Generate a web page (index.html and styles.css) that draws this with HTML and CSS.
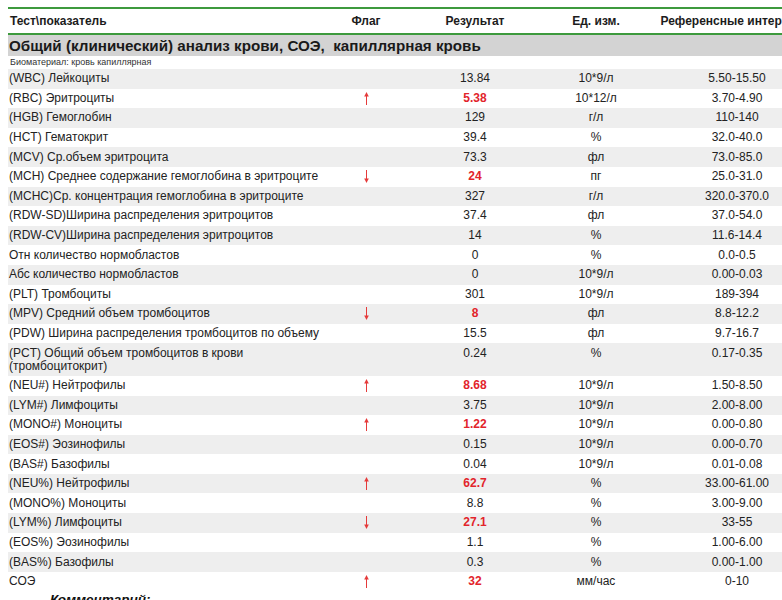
FILE: index.html
```html
<!DOCTYPE html>
<html lang="ru">
<head>
<meta charset="utf-8">
<title>Результаты анализов</title>
<link rel="stylesheet" href="styles.css">
</head>
<body>
<div class="sheet">
<table class="results">
<colgroup>
<col class="w-name"><col class="w-flag"><col class="w-res"><col class="w-unit"><col class="w-ref">
</colgroup>
<thead>
<tr><th class="c-name">Тест\показатель</th><th>Флаг</th><th>Результат</th><th>Ед. изм.</th><th>Референсные интервалы</th></tr>
</thead>
<tbody class="head">
<tr class="section"><td colspan="5">Общий (клинический) анализ крови, СОЭ,&nbsp; капиллярная кровь</td></tr>
<tr class="bio"><td colspan="5">Биоматериал: кровь капиллярная</td></tr>
</tbody>
<tbody class="data">
<tr><td class="c-name">(WBC) Лейкоциты</td><td></td><td>13.84</td><td>10*9/л</td><td>5.50-15.50</td></tr>
<tr><td class="c-name">(RBC) Эритроциты</td><td class="flag"><svg class="arrow" viewBox="0 0 7 13" width="7" height="13"><path d="M3.5 13V3" stroke="currentColor" stroke-width="1"/><path d="M3.5 0L1.2 4.5H5.8Z" fill="currentColor"/></svg></td><td class="bad">5.38</td><td>10*12/л</td><td>3.70-4.90</td></tr>
<tr><td class="c-name">(HGB) Гемоглобин</td><td></td><td>129</td><td>г/л</td><td>110-140</td></tr>
<tr><td class="c-name">(HCT) Гематокрит</td><td></td><td>39.4</td><td>%</td><td>32.0-40.0</td></tr>
<tr><td class="c-name">(MCV) Ср.объем эритроцита</td><td></td><td>73.3</td><td>фл</td><td>73.0-85.0</td></tr>
<tr><td class="c-name">(MCH) Среднее содержание гемоглобина в эритроците</td><td class="flag"><svg class="arrow" viewBox="0 0 7 13" width="7" height="13"><path d="M3.5 0V10" stroke="currentColor" stroke-width="1"/><path d="M3.5 13L1.2 8.5H5.8Z" fill="currentColor"/></svg></td><td class="bad">24</td><td>пг</td><td>25.0-31.0</td></tr>
<tr><td class="c-name">(MCHC)Ср. концентрация гемоглобина в эритроците</td><td></td><td>327</td><td>г/л</td><td>320.0-370.0</td></tr>
<tr><td class="c-name">(RDW-SD)Ширина распределения эритроцитов</td><td></td><td>37.4</td><td>фл</td><td>37.0-54.0</td></tr>
<tr><td class="c-name">(RDW-CV)Ширина распределения эритроцитов</td><td></td><td>14</td><td>%</td><td>11.6-14.4</td></tr>
<tr><td class="c-name">Отн количество нормобластов</td><td></td><td>0</td><td>%</td><td>0.0-0.5</td></tr>
<tr><td class="c-name">Абс количество нормобластов</td><td></td><td>0</td><td>10*9/л</td><td>0.00-0.03</td></tr>
<tr><td class="c-name">(PLT) Тромбоциты</td><td></td><td>301</td><td>10*9/л</td><td>189-394</td></tr>
<tr><td class="c-name">(MPV) Средний объем тромбоцитов</td><td class="flag"><svg class="arrow" viewBox="0 0 7 13" width="7" height="13"><path d="M3.5 0V10" stroke="currentColor" stroke-width="1"/><path d="M3.5 13L1.2 8.5H5.8Z" fill="currentColor"/></svg></td><td class="bad">8</td><td>фл</td><td>8.8-12.2</td></tr>
<tr><td class="c-name">(PDW) Ширина распределения тромбоцитов по объему</td><td></td><td>15.5</td><td>фл</td><td>9.7-16.7</td></tr>
<tr><td class="c-name">(PCT) Общий объем тромбоцитов в крови<br>(тромбоцитокрит)</td><td></td><td>0.24</td><td>%</td><td>0.17-0.35</td></tr>
<tr><td class="c-name">(NEU#) Нейтрофилы</td><td class="flag"><svg class="arrow" viewBox="0 0 7 13" width="7" height="13"><path d="M3.5 13V3" stroke="currentColor" stroke-width="1"/><path d="M3.5 0L1.2 4.5H5.8Z" fill="currentColor"/></svg></td><td class="bad">8.68</td><td>10*9/л</td><td>1.50-8.50</td></tr>
<tr><td class="c-name">(LYM#) Лимфоциты</td><td></td><td>3.75</td><td>10*9/л</td><td>2.00-8.00</td></tr>
<tr><td class="c-name">(MONO#) Моноциты</td><td class="flag"><svg class="arrow" viewBox="0 0 7 13" width="7" height="13"><path d="M3.5 13V3" stroke="currentColor" stroke-width="1"/><path d="M3.5 0L1.2 4.5H5.8Z" fill="currentColor"/></svg></td><td class="bad">1.22</td><td>10*9/л</td><td>0.00-0.80</td></tr>
<tr><td class="c-name">(EOS#) Эозинофилы</td><td></td><td>0.15</td><td>10*9/л</td><td>0.00-0.70</td></tr>
<tr><td class="c-name">(BAS#) Базофилы</td><td></td><td>0.04</td><td>10*9/л</td><td>0.01-0.08</td></tr>
<tr><td class="c-name">(NEU%) Нейтрофилы</td><td class="flag"><svg class="arrow" viewBox="0 0 7 13" width="7" height="13"><path d="M3.5 13V3" stroke="currentColor" stroke-width="1"/><path d="M3.5 0L1.2 4.5H5.8Z" fill="currentColor"/></svg></td><td class="bad">62.7</td><td>%</td><td>33.00-61.00</td></tr>
<tr><td class="c-name">(MONO%) Моноциты</td><td></td><td>8.8</td><td>%</td><td>3.00-9.00</td></tr>
<tr><td class="c-name">(LYM%) Лимфоциты</td><td class="flag"><svg class="arrow" viewBox="0 0 7 13" width="7" height="13"><path d="M3.5 0V10" stroke="currentColor" stroke-width="1"/><path d="M3.5 13L1.2 8.5H5.8Z" fill="currentColor"/></svg></td><td class="bad">27.1</td><td>%</td><td>33-55</td></tr>
<tr><td class="c-name">(EOS%) Эозинофилы</td><td></td><td>1.1</td><td>%</td><td>1.00-6.00</td></tr>
<tr><td class="c-name">(BAS%) Базофилы</td><td></td><td>0.3</td><td>%</td><td>0.00-1.00</td></tr>
<tr><td class="c-name">СОЭ</td><td class="flag"><svg class="arrow" viewBox="0 0 7 13" width="7" height="13"><path d="M3.5 13V3" stroke="currentColor" stroke-width="1"/><path d="M3.5 0L1.2 4.5H5.8Z" fill="currentColor"/></svg></td><td class="bad">32</td><td>мм/час</td><td>0-10</td></tr>
</tbody>
</table>
<p class="comment">Комментарий:</p>
</div>
</body>
</html>
```
FILE: styles.css
```css
html, body {
  margin: 0;
  padding: 0;
  overflow: hidden;
  background: #fff;
}
body {
  font-family: "Liberation Sans", Arial, sans-serif;
  color: #222;
}
.sheet {
  padding: 7px 0 0 8px;
}
.results {
  border-collapse: separate;
  border-spacing: 0;
  table-layout: fixed;
  width: 832px;
  font-size: 12px;
  line-height: 13px;
}
.w-name { width: 332px; }
.w-flag { width: 52px; }
.w-res { width: 166px; }
.w-unit { width: 76px; }
.w-ref { width: 206px; }

.results th {
  font-weight: bold;
  text-align: center;
  color: #1c1c1c;
  padding: 6px 0 5px;
  border-top: 2px solid #3d9a3d;
  border-bottom: 2px solid #3d9a3d;
  white-space: nowrap;
}
.results th.c-name {
  text-align: left;
  padding-left: 2px;
}
.section td {
  background: #d3d3d3;
  font-size: 15.2px;
  font-weight: bold;
  line-height: 21px;
  padding: 0 0 0 1px;
  color: #1a1a1a;
  white-space: nowrap;
}
.bio td {
  font-size: 9px;
  line-height: 13px;
  padding: 0 0 0 2px;
  color: #333;
}
.data td {
  padding: 3.3px 0;
  text-align: center;
  vertical-align: top;
  white-space: nowrap;
}
.data tr:nth-child(odd) td {
  background: #eeeeee;
}
.data td.c-name {
  text-align: left;
  padding-left: 1px;
}
.data td.bad {
  color: #e2242b;
  font-weight: bold;
}
.flag {
  color: #e53a3a;
}
.arrow {
  display: inline-block;
  vertical-align: -3px;
}
.comment {
  margin: 0;
  padding: 1px 0 0 42px;
  font-size: 13.5px;
  font-weight: bold;
  font-style: italic;
  color: #111;
}
```
